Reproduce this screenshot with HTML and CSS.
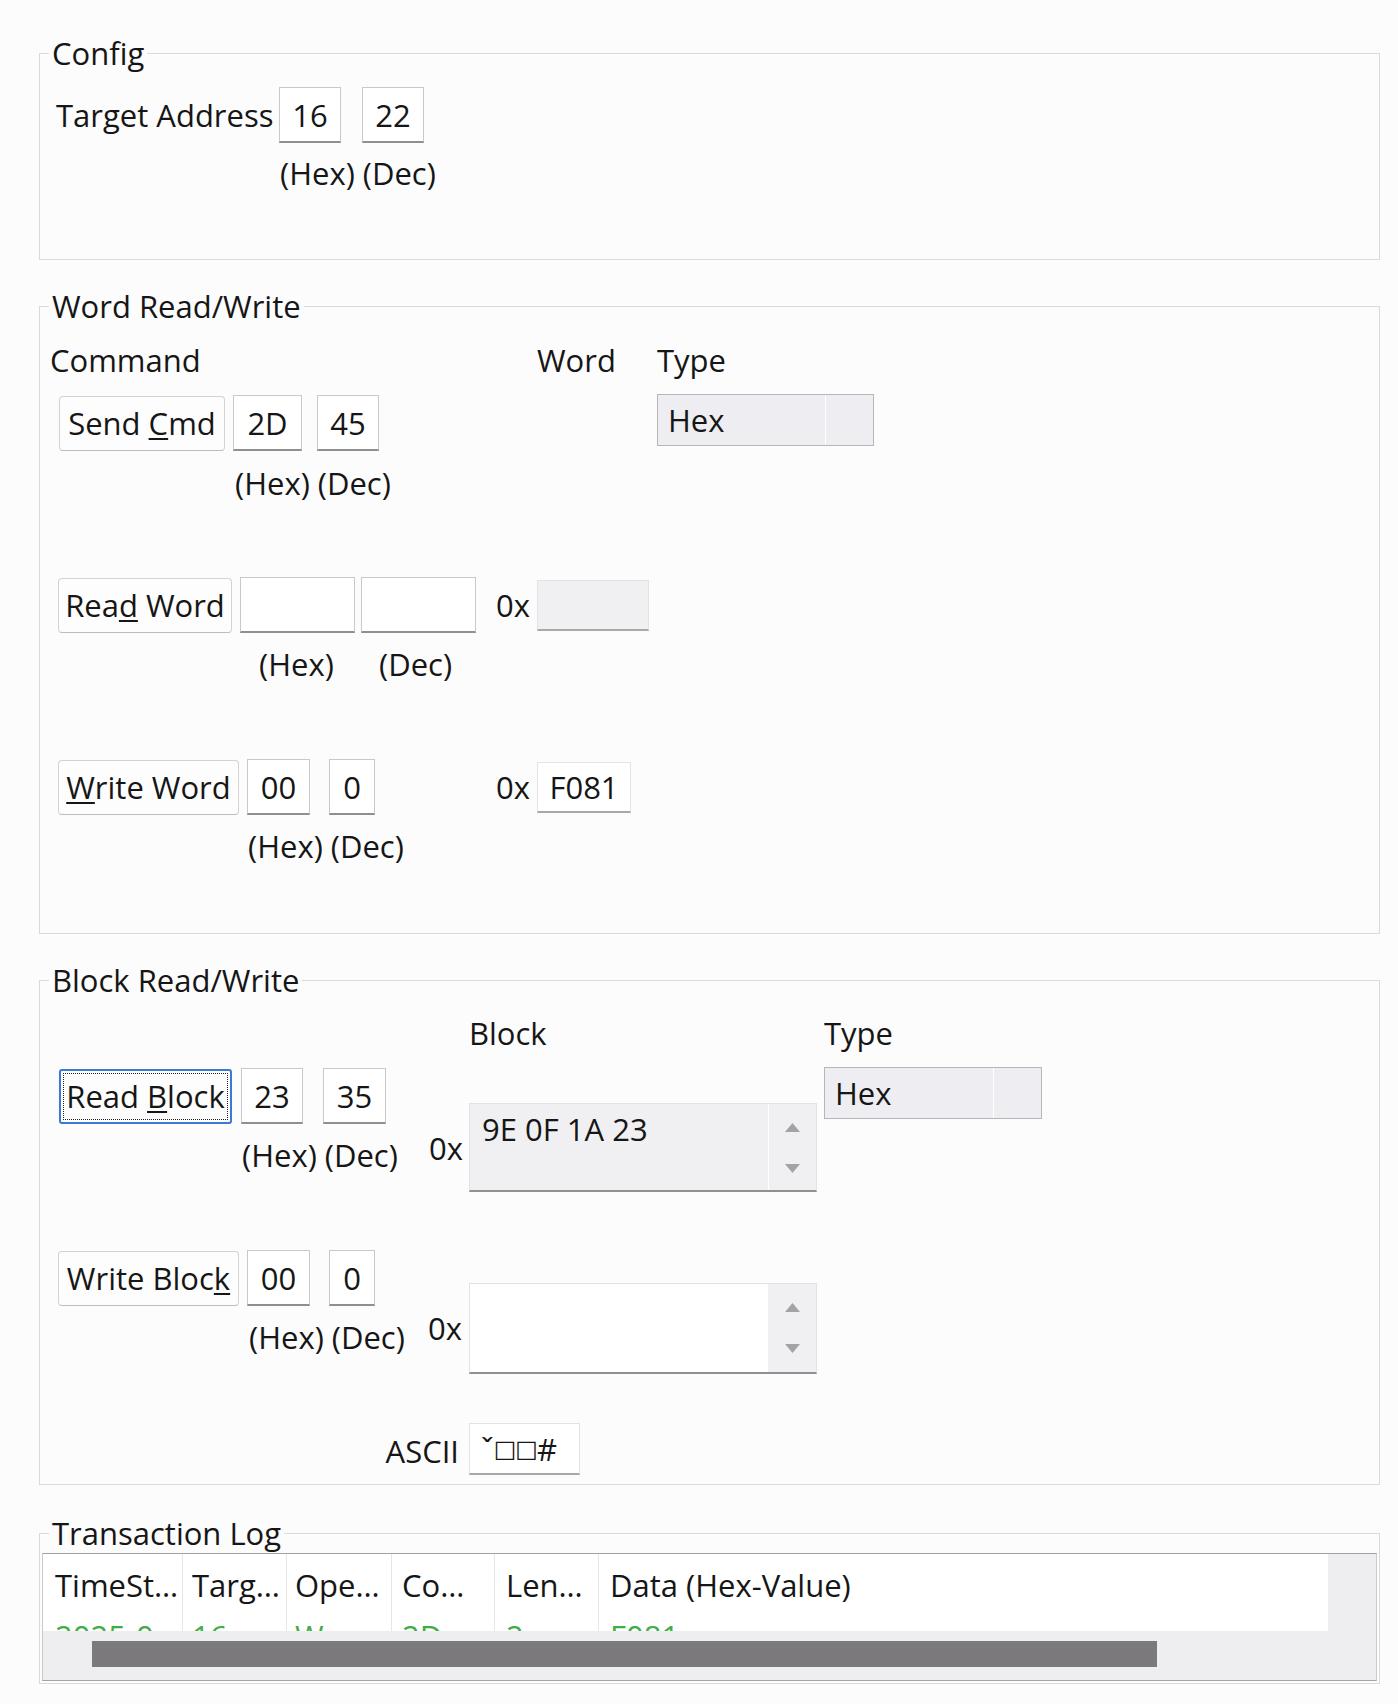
FILE: index.html
```html
<!DOCTYPE html>
<html lang="en">
<head>
<meta charset="utf-8">
<title>SMBus Tool</title>
<link rel="stylesheet" href="styles.css">
</head>
<body>
<div class="page">

  <fieldset class="group g-config">
    <legend>Config</legend>
    <div class="row r-target">
      <span class="lbl w-target">Target Address</span>
      <span class="tb w62">16</span>
      <span class="tb w62 ml21">22</span>
    </div>
    <div class="line sub-config">(Hex) (Dec)</div>
  </fieldset>

  <fieldset class="group g-word">
    <legend>Word Read/Write</legend>
    <div class="line hdr-word">
      <span class="h-cmd">Command</span>
      <span class="h-word">Word</span>
      <span>Type</span>
    </div>
    <div class="row r-send">
      <span class="btn w166"><span>Send <u>C</u>md</span></span>
      <span class="tb w69 ml8">2D</span>
      <span class="tb w62 ml15">45</span>
      <span class="combo c-word"><span class="val">Hex</span><span class="drop"></span></span>
    </div>
    <div class="line sub-send">(Hex) (Dec)</div>

    <div class="row r-read">
      <span class="btn w174"><span>Rea<u>d</u> Word</span></span>
      <span class="tb w115 ml8"></span>
      <span class="tb w115 ml6"></span>
      <span class="ox ml20">0x</span>
      <span class="box ro w112"></span>
    </div>
    <div class="line sub-read"><span class="s-hex">(Hex)</span><span>(Dec)</span></div>

    <div class="row r-write">
      <span class="btn w181"><span><u>W</u>rite Word</span></span>
      <span class="tb w63 ml8">00</span>
      <span class="tb w46 ml19">0</span>
      <span class="ox ml121">0x</span>
      <span class="box w94">F081</span>
    </div>
    <div class="line sub-write">(Hex) (Dec)</div>
  </fieldset>

  <fieldset class="group g-block">
    <legend>Block Read/Write</legend>
    <div class="bgrid line bhdr">
      <span class="cc">Block</span>
      <span class="ce">Type</span>
    </div>

    <div class="bgrid b2">
      <div class="ca">
        <div class="row rb-read">
          <span class="btn focus w173"><span>Read <u>B</u>lock</span></span>
          <span class="tb w62 ml9">23</span>
          <span class="tb w63 ml20">35</span>
        </div>
        <div class="line sub-b1">(Hex) (Dec)</div>
      </div>
      <div class="cb line ox ox1">0x</div>
      <div class="cc ta ro ta1">
        <div class="txt">9E 0F 1A 23</div>
        <div class="sb">
          <svg width="15" height="9" viewBox="0 0 15 9"><path d="M7.5 0 L15 9 L0 9 Z" fill="#a3a3a3"/></svg>
          <svg width="15" height="9" viewBox="0 0 15 9"><path d="M0 0 L15 0 L7.5 9 Z" fill="#a3a3a3"/></svg>
        </div>
      </div>
      <div class="ce combo c-block"><span class="val">Hex</span><span class="drop"></span></div>
    </div>

    <div class="bgrid b3">
      <div class="ca">
        <div class="row rb-write">
          <span class="btn w181"><span>Write Bloc<u>k</u></span></span>
          <span class="tb w63 ml8">00</span>
          <span class="tb w46 ml19">0</span>
        </div>
        <div class="line sub-b2">(Hex) (Dec)</div>
      </div>
      <div class="cb line ox ox2">0x</div>
      <div class="cc ta ta2">
        <div class="txt"></div>
        <div class="sb">
          <svg width="15" height="9" viewBox="0 0 15 9"><path d="M7.5 0 L15 9 L0 9 Z" fill="#a3a3a3"/></svg>
          <svg width="15" height="9" viewBox="0 0 15 9"><path d="M0 0 L15 0 L7.5 9 Z" fill="#a3a3a3"/></svg>
        </div>
      </div>
    </div>

    <div class="bgrid b4">
      <span class="line ascii-lbl">ASCII</span>
      <span class="cc box ascii-box">ˇ<span class="tofu">□□</span>#</span>
    </div>
  </fieldset>

  <fieldset class="group g-log">
    <legend>Transaction Log</legend>
    <div class="log">
      <div class="main">
        <div class="view">
          <div class="col k1"><div class="h">TimeSt…</div><div class="d">2025-0…</div></div>
          <div class="col k2"><div class="h">Targ…</div><div class="d">16</div></div>
          <div class="col k3"><div class="h">Ope…</div><div class="d">Wr…</div></div>
          <div class="col k4"><div class="h">Co…</div><div class="d">2D</div></div>
          <div class="col k5"><div class="h">Len…</div><div class="d">2</div></div>
          <div class="col k6"><div class="h">Data (Hex-Value)</div><div class="d">F081</div></div>
        </div>
        <div class="hsb"><div class="thumb"></div></div>
      </div>
      <div class="vsb"></div>
    </div>
  </fieldset>

</div>
</body>
</html>
```

FILE: styles.css
```css
* { box-sizing: border-box; }

body {
  margin: 0;
  background: #fcfcfd;
  font-family: "Open Sans", "Noto Sans", "DejaVu Sans", sans-serif;
  font-size: 31px;
  color: #161616;
}

.page {
  width: 1380px;
  padding: 33px 0 0 39px;
}

.group {
  margin: 0;
  padding: 0;
  border: 1px solid #dadada;
  min-width: 0;
  width: 100%;
}
.group + .group { margin-top: 26px; }

legend {
  margin-left: 9px;
  padding: 0 3px;
  line-height: 40px;
  white-space: nowrap;
}

.line {
  height: 40px;
  line-height: 40px;
  white-space: nowrap;
}

.row {
  display: flex;
  align-items: center;
  white-space: nowrap;
}

u { text-decoration-thickness: 2px; text-underline-offset: 3px; }

/* widths / gaps */
.w46 { width: 46px; }
.w62 { width: 62px; }
.w63 { width: 63px; }
.w69 { width: 69px; }
.w94 { width: 94px; }
.w112 { width: 112px; }
.w115 { width: 115px; }
.w166 { width: 166px; }
.w173 { width: 173px; }
.w174 { width: 174px; }
.w181 { width: 181px; }
.ml6 { margin-left: 6px; }
.ml8 { margin-left: 8px; }
.ml9 { margin-left: 9px; }
.ml15 { margin-left: 15px; }
.ml19 { margin-left: 19px; }
.ml20 { margin-left: 20px; }
.ml21 { margin-left: 21px; }
.ml121 { margin-left: 121px; }

/* controls */
.tb {
  display: flex;
  align-items: center;
  justify-content: center;
  height: 56px;
  background: #ffffff;
  border: 1px solid #c9c9c9;
  border-bottom: 2px solid #8f8f8f;
}

.btn {
  display: flex;
  align-items: center;
  justify-content: center;
  height: 55px;
  background: #fdfdfd;
  border: 1px solid #d3d3d3;
  border-bottom-color: #bdbdbd;
  border-radius: 4px;
  white-space: pre;
}
.btn.focus {
  border: 2px solid #3a7ad6;
  border-radius: 3px;
  outline: 1px dotted #222;
  outline-offset: -5px;
}

.ox {
  display: inline-block;
  width: 41px;
}

.box {
  display: flex;
  align-items: center;
  justify-content: center;
  height: 51px;
  background: #ffffff;
  border: 1px solid #e2e2e2;
  border-bottom: 2px solid #a8a8a8;
}
.box.ro { background: #f0eff2; }

.combo {
  display: flex;
  height: 52px;
  background: #eeedf1;
  border: 1px solid #b6b6b6;
}
.combo .val {
  flex: 1;
  display: flex;
  align-items: center;
  padding-left: 10px;
}
.combo .drop {
  width: 48px;
  border-left: 1px solid #ffffff;
}
.c-word {
  width: 217px;
  margin-left: 278px;
  align-self: flex-start;
  margin-top: -1px;
}
.c-block { width: 218px; }

/* Config */
.r-target { margin-top: 14px; }
.w-target { width: 239px; padding-left: 16px; flex: none; }
.sub-config { margin-top: 10px; padding-left: 240px; }
.g-config { padding-bottom: 66px; }

/* Word */
.hdr-word { margin-top: 14px; padding-left: 10px; display: flex; }
.h-cmd { width: 487px; }
.h-word { width: 120px; }
.r-send { margin-top: 15px; padding-left: 19px; }
.sub-send { margin-top: 12px; padding-left: 195px; }
.r-read { margin-top: 74px; padding-left: 18px; }
.sub-read { margin-top: 11px; padding-left: 219px; }
.s-hex { display: inline-block; width: 120px; }
.r-write { margin-top: 75px; padding-left: 18px; }
.sub-write { margin-top: 11px; padding-left: 208px; }
.g-word { padding-bottom: 67px; }

/* Block */
.bgrid {
  display: grid;
  grid-template-columns: 388px 41px 348px 7px 218px;
  align-items: start;
}
.ca { grid-column: 1; }
.cb { grid-column: 2; }
.cc { grid-column: 3; }
.ce { grid-column: 5; }

.bhdr { margin-top: 13px; }

.rb-read { margin-top: 15px; padding-left: 19px; }
.sub-b1 { margin-top: 11px; padding-left: 202px; }
.ox1 { margin-top: 75px; padding-left: 1px; }
.ta1 { margin-top: 50px; height: 89px; }
.b2 .combo { margin-top: 14px; }

.rb-write { margin-top: 58px; padding-left: 18px; }
.sub-b2 { margin-top: 11px; padding-left: 209px; }
.ox2 { margin-top: 116px; }
.ta2 { margin-top: 91px; height: 91px; }

.ta {
  display: flex;
  width: 348px;
  background: #ffffff;
  border: 1px solid #e2e2e2;
  border-bottom: 2px solid #909090;
}
.ta.ro { background: #f0eff2; }
.ta .txt {
  flex: 1;
  padding: 5px 0 0 12px;
  line-height: 40px;
  white-space: nowrap;
}
.ta .sb {
  width: 48px;
  display: flex;
  flex-direction: column;
  align-items: center;
  gap: 32px;
  padding-top: 19px;
  background: #f0eff2;
}
.ta.ro .sb { border-left: 1px solid #ffffff; }
.ta .sb svg { display: block; }

.ascii-lbl {
  grid-column: 1 / 3;
  justify-self: end;
  margin-right: 10px;
  margin-top: 57px;
}
.ascii-box {
  width: 111px;
  height: 52px;
  margin-top: 49px;
  justify-content: flex-start;
  padding-left: 11px;
}
.tofu {
  font-family: "DejaVu Sans", sans-serif;
  font-size: 24px;
  letter-spacing: -1px;
}
.g-block { padding-bottom: 9px; }

/* Log */
.group.g-log { margin-top: 28px; padding-bottom: 2px; }
.log {
  display: flex;
  height: 128px;
  margin: 0 2px;
  background: #eeedf0;
  border: 1px solid #cbcbcb;
  border-top-color: #a2a2a2;
  border-bottom-color: #a2a2a2;
}
.log .main {
  width: 1285px;
  display: flex;
  flex-direction: column;
}
.view {
  display: flex;
  height: 77px;
  overflow: hidden;
  background: #ffffff;
}
.col {
  flex: none;
  padding-left: 11px;
  border-right: 1px solid #e7e7e7;
  white-space: nowrap;
  overflow: hidden;
}
.k1 { width: 140px; padding-left: 12px; }
.k2 { width: 104px; padding-left: 9px; }
.k3 { width: 105px; padding-left: 8px; }
.k4 { width: 103px; padding-left: 10px; }
.k5 { width: 104px; }
.k6 { flex: 1; border-right: none; }
.col .h { height: 62px; line-height: 62px; }
.col .d { line-height: 40px; color: #3fae45; }
.hsb {
  flex: 1;
  padding: 10px 0 0 49px;
}
.thumb {
  width: 1065px;
  height: 26px;
  background: #7b797b;
}
.vsb { flex: 1; }
```
